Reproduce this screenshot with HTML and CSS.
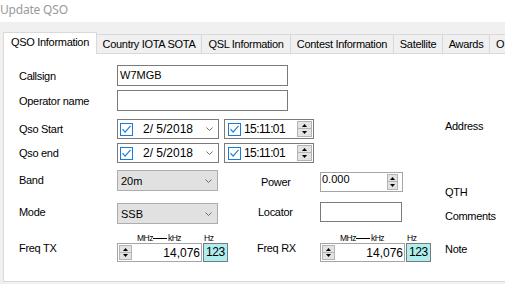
FILE: index.html
```html
<!DOCTYPE html>
<html lang="en">
<head>
  <meta charset="UTF-8">
  <title>Update QSO</title>
  <link rel="stylesheet" href="styles.css">
</head>
<body>
  <div class="titlebar">Update QSO</div>

  <div class="window">
    <!-- tab strip -->
    <div class="tabs">
      <div class="tab active">QSO Information</div>
      <div class="tab t-country">Country IOTA SOTA</div>
      <div class="tab t-qsl">QSL Information</div>
      <div class="tab t-contest">Contest Information</div>
      <div class="tab t-sat">Satellite</div>
      <div class="tab t-awards">Awards</div>
      <div class="tab t-other">O</div>
    </div>

    <div class="panel">
      <div class="main">
        <div class="row r-call">
          <div class="lbl">Callsign</div>
          <div class="text">W7MGB</div>
        </div>
        <div class="row r-oper">
          <div class="lbl">Operator name</div>
          <div class="text"></div>
        </div>

        <div class="row r-start">
          <div class="lbl">Qso Start</div>
          <div class="date">
            <svg class="chk" width="13" height="13" viewBox="0 0 13 13"><rect x="0.5" y="0.5" width="12" height="12" fill="#fff" stroke="#1a7bd6"/><path d="M2.5 6.2l2.6 3 5.4-6.4" fill="none" stroke="#1a7bd6" stroke-width="1.1"/></svg>
            <span class="dval">2/ 5/2018</span>
            <svg class="chev" width="7" height="4" viewBox="0 0 7 4"><path d="M0.5 0.5l3 3 3-3" fill="none" stroke="#6d6d6d"/></svg>
          </div>
          <div class="time">
            <svg class="chk" width="13" height="13" viewBox="0 0 13 13"><rect x="0.5" y="0.5" width="12" height="12" fill="#fff" stroke="#1a7bd6"/><path d="M2.5 6.2l2.6 3 5.4-6.4" fill="none" stroke="#1a7bd6" stroke-width="1.1"/></svg>
            <span class="tval">15:11:01</span>
            <svg class="spin" width="15" height="16" viewBox="0 0 15 16"><rect x="0.5" y="0.5" width="14" height="15" fill="#e3e3e3" stroke="#b4b4b4"/><path d="M1 7.5h13" stroke="#b4b4b4"/><path d="M5 6h5l-2.5-3z" fill="#000"/><path d="M5 10h5l-2.5 3z" fill="#000"/></svg>
          </div>
        </div>

        <div class="row r-end">
          <div class="lbl">Qso end</div>
          <div class="date">
            <svg class="chk" width="13" height="13" viewBox="0 0 13 13"><rect x="0.5" y="0.5" width="12" height="12" fill="#fff" stroke="#1a7bd6"/><path d="M2.5 6.2l2.6 3 5.4-6.4" fill="none" stroke="#1a7bd6" stroke-width="1.1"/></svg>
            <span class="dval">2/ 5/2018</span>
            <svg class="chev" width="7" height="4" viewBox="0 0 7 4"><path d="M0.5 0.5l3 3 3-3" fill="none" stroke="#6d6d6d"/></svg>
          </div>
          <div class="time">
            <svg class="chk" width="13" height="13" viewBox="0 0 13 13"><rect x="0.5" y="0.5" width="12" height="12" fill="#fff" stroke="#1a7bd6"/><path d="M2.5 6.2l2.6 3 5.4-6.4" fill="none" stroke="#1a7bd6" stroke-width="1.1"/></svg>
            <span class="tval">15:11:01</span>
            <svg class="spin" width="15" height="16" viewBox="0 0 15 16"><rect x="0.5" y="0.5" width="14" height="15" fill="#e3e3e3" stroke="#b4b4b4"/><path d="M1 7.5h13" stroke="#b4b4b4"/><path d="M5 6h5l-2.5-3z" fill="#000"/><path d="M5 10h5l-2.5 3z" fill="#000"/></svg>
          </div>
        </div>

        <div class="row r-band">
          <div class="left">
            <div class="lbl">Band</div>
            <div class="combo"><span>20m</span><svg width="7" height="4" viewBox="0 0 7 4"><path d="M0.5 0.5l3 3 3-3" fill="none" stroke="#6d6d6d"/></svg></div>
          </div>
          <div class="lbl2 l-power">Power</div>
          <div class="power">
            <span>0.000</span>
            <svg class="spin-s" width="11" height="16" viewBox="0 0 11 16"><rect x="0.5" y="0.5" width="10" height="15" fill="#e3e3e3" stroke="#b4b4b4"/><path d="M1 7.5h9" stroke="#b4b4b4"/><path d="M3 6h5l-2.5-3z" fill="#000"/><path d="M3 10h5l-2.5 3z" fill="#000"/></svg>
          </div>
        </div>

        <div class="row r-mode">
          <div class="left">
            <div class="lbl">Mode</div>
            <div class="combo"><span>SSB</span><svg width="7" height="4" viewBox="0 0 7 4"><path d="M0.5 0.5l3 3 3-3" fill="none" stroke="#6d6d6d"/></svg></div>
          </div>
          <div class="lbl2 l-loc">Locator</div>
          <div class="locator"></div>
        </div>

        <div class="row r-freq">
          <div class="left">
            <div class="lbl flbl">Freq TX</div>
            <div class="freq">
              <div class="fhead"><span class="fh-a">MHz<i class="dash"></i>kHz</span><span>Hz</span></div>
              <div class="fboxes">
                <div class="num">
                  <svg width="13" height="15" viewBox="0 0 13 15"><rect x="0.5" y="0.5" width="12" height="14" fill="#e3e3e3" stroke="#b4b4b4"/><path d="M1 7.5h11" stroke="#b4b4b4"/><path d="M4 6h5l-2.5-3z" fill="#000"/><path d="M4 9h5l-2.5 3z" fill="#000"/></svg>
                  <span>14,076</span>
                </div>
                <div class="hz">123</div>
              </div>
            </div>
          </div>
          <div class="lbl2 flbl">Freq RX</div>
          <div class="freq">
            <div class="fhead"><span class="fh-a">MHz<i class="dash"></i>kHz</span><span>Hz</span></div>
            <div class="fboxes">
              <div class="num">
                <svg width="13" height="15" viewBox="0 0 13 15"><rect x="0.5" y="0.5" width="12" height="14" fill="#e3e3e3" stroke="#b4b4b4"/><path d="M1 7.5h11" stroke="#b4b4b4"/><path d="M4 6h5l-2.5-3z" fill="#000"/><path d="M4 9h5l-2.5 3z" fill="#000"/></svg>
                <span>14,076</span>
              </div>
              <div class="hz">123</div>
            </div>
          </div>
        </div>
      </div>

      <!-- right hand labels -->
      <div class="side">
        <div class="s-addr">Address</div>
        <div class="s-qth">QTH</div>
        <div class="s-comm">Comments</div>
        <div class="s-note">Note</div>
      </div>
    </div>
  </div>
</body>
</html>
```

FILE: styles.css
```css
* {
  margin: 0;
  padding: 0;
  box-sizing: border-box;
}
body {
  width: 505px;
  height: 284px;
  overflow: hidden;
  background-color: #f0f0f0;
  font-family: "Liberation Sans", Arial, sans-serif;
  font-size: 11px;
  letter-spacing: -0.3px;
  color: #000;
}
.titlebar {
  height: 22px;
  background-color: #fff;
  color: #9a9a9a;
  font-family: "Noto Sans", sans-serif;
  font-size: 12px;
  letter-spacing: -0.2px;
  line-height: 19px;
}
.window {
  padding: 10px 0 0 3px;
}

/* tabs */
.tabs {
  display: flex;
  align-items: flex-end;
  height: 21px;
}
.tab {
  flex: none;
  height: 19px;
  border-top: 1px solid #d9d9d9;
  border-right: 1px solid #d9d9d9;
  line-height: 18px;
  text-align: center;
  white-space: nowrap;
  overflow: hidden;
}
.tab.active {
  width: 94px;
  height: 22px;
  border: 1px solid #d9d9d9;
  border-bottom: none;
  background-color: #fff;
  margin-bottom: -1px;
  position: relative;
  z-index: 1;
}
.t-country { width: 105px; }
.t-qsl { width: 89px; }
.t-contest { width: 103px; }
.t-sat { width: 49px; }
.t-awards { width: 47px; }
.t-other {
  width: 16px;
  text-align: left;
  padding-left: 6px;
  border-right: none;
}

/* panel */
.panel {
  display: flex;
  width: 600px;
  height: 229px;
  background-color: #fff;
  border-top: 1px solid #d9d9d9;
  border-left: 1px solid #d9d9d9;
  border-bottom: 1px solid #d9d9d9;
}
.main {
  width: 441px;
  flex: none;
}
.row {
  display: flex;
  align-items: center;
}
.lbl {
  flex: none;
  width: 113px;
  padding-left: 15px;
}
.r-call { margin-top: 11px; }
.r-oper { margin-top: 4px; }
.r-start { margin-top: 8px; }
.r-end { margin-top: 4px; }
.r-band { margin-top: 7px; align-items: flex-start; }
.r-mode { margin-top: 10px; align-items: flex-start; }
.r-freq { margin-top: 9px; align-items: flex-start; }

.text {
  width: 171px;
  height: 21px;
  border: 1px solid #7a7a7a;
  padding-left: 2px;
  line-height: 19px;
  letter-spacing: 0;
}

/* date / time pickers */
.date, .time {
  display: flex;
  align-items: center;
  height: 20px;
  border: 1px solid #7a7a7a;
  font-size: 12px;
  letter-spacing: 0;
}
.date {
  width: 102px;
  padding: 0 5px 0 2px;
}
.time {
  width: 90px;
  margin-left: 5px;
  padding: 0 1px 0 2px;
}
.time .chk { margin-left: 1px; }
.dval {
  margin-left: 10px;
  flex: 1;
  white-space: pre;
}
.tval {
  margin-left: 3px;
  flex: 1;
  letter-spacing: -0.6px;
}

.left {
  display: flex;
  width: 253px;
  flex: none;
}
.combo {
  display: flex;
  justify-content: space-between;
  align-items: center;
  width: 101px;
  height: 21px;
  padding: 0 5px 0 3px;
  background-color: #e1e1e1;
  border: 1px solid #adadad;
  letter-spacing: 0;
}
.r-band .lbl { line-height: 21px; }
.r-mode .lbl { line-height: 18px; }

.lbl2 {
  flex: none;
  width: 63px;
}
.l-power {
  padding-left: 4px;
  margin-top: 2px;
  line-height: 21px;
}
.l-loc {
  padding-left: 1px;
  line-height: 18px;
}
.power {
  display: flex;
  justify-content: space-between;
  align-items: flex-start;
  width: 83px;
  height: 20px;
  margin-top: 2px;
  padding: 0 4px 0 1px;
  border: 1px solid #a5a5a5;
  line-height: 13px;
  letter-spacing: 0;
}
.power svg { margin-top: 1px; }
.locator {
  width: 82px;
  height: 20px;
  margin-top: -1px;
  border: 1px solid #7a7a7a;
}

/* frequency boxes */
.flbl {
  margin-top: 6px;
  line-height: 19px;
}
.freq {
  display: flex;
  flex-direction: column;
}
.fhead {
  display: flex;
  height: 10px;
  font-size: 8.5px;
  letter-spacing: -0.5px;
  line-height: 10px;
}
.fh-a {
  display: flex;
  align-items: center;
  width: 87px;
  padding-left: 20px;
}
.dash {
  display: inline-block;
  width: 14px;
  height: 1px;
  background-color: #000;
  margin: 1px 1px 0 0;
}
.fboxes {
  display: flex;
}
.num {
  display: flex;
  justify-content: space-between;
  align-items: center;
  width: 85px;
  height: 19px;
  padding: 0 1px 0 1px;
  border: 1px solid #a5a5a5;
  font-size: 12px;
  letter-spacing: 0;
}
.hz {
  width: 25px;
  height: 19px;
  margin-left: 1px;
  padding-left: 2px;
  background-color: #afeeee;
  border: 1px solid #7a7a7a;
  font-size: 12px;
  letter-spacing: -0.4px;
  line-height: 17px;
}

/* right labels */
.side {
  padding-top: 66px;
  line-height: 13px;
}
.s-qth { margin-top: 53px; }
.s-comm { margin-top: 11px; }
.s-note { margin-top: 20px; }
```
